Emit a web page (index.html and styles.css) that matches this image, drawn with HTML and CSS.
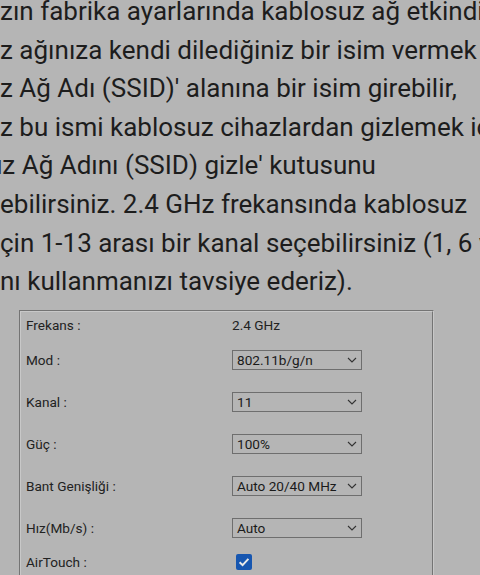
FILE: index.html
```html
<!DOCTYPE html>
<html lang="tr">
<head>
<meta charset="utf-8">
<title>Kablosuz Ayarları</title>
<link rel="stylesheet" href="styles.css">
</head>
<body>
<div class="page">
  <p class="intro">
    <span class="line">zın fabrika ayarlarında kablosuz ağ etkindir.</span>
    <span class="line">z ağınıza kendi dilediğiniz bir isim vermek için</span>
    <span class="line">z Ağ Adı (SSID)' alanına bir isim girebilir,</span>
    <span class="line">z bu ismi kablosuz cihazlardan gizlemek için</span>
    <span class="line shift">uz Ağ Adını (SSID) gizle' kutusunu</span>
    <span class="line">ebilirsiniz. 2.4 GHz frekansında kablosuz</span>
    <span class="line">çin 1-13 arası bir kanal seçebilirsiniz (1, 6 ve 11</span>
    <span class="line">nı kullanmanızı tavsiye ederiz).</span>
  </p>
  <fieldset class="settings">
    <div class="row row-first">
      <span class="label">Frekans :</span>
      <span class="value">2.4 GHz</span>
    </div>
    <div class="row">
      <span class="label">Mod :</span>
      <div class="select"><span>802.11b/g/n</span><svg class="chev" width="10" height="6" viewBox="0 0 10 6"><path d="M1 1 L5 5 L9 1" fill="none" stroke="#333" stroke-width="1.1"/></svg></div>
    </div>
    <div class="row">
      <span class="label">Kanal :</span>
      <div class="select"><span>11</span><svg class="chev" width="10" height="6" viewBox="0 0 10 6"><path d="M1 1 L5 5 L9 1" fill="none" stroke="#333" stroke-width="1.1"/></svg></div>
    </div>
    <div class="row">
      <span class="label">Güç :</span>
      <div class="select"><span>100%</span><svg class="chev" width="10" height="6" viewBox="0 0 10 6"><path d="M1 1 L5 5 L9 1" fill="none" stroke="#333" stroke-width="1.1"/></svg></div>
    </div>
    <div class="row">
      <span class="label">Bant Genişliği :</span>
      <div class="select"><span>Auto 20/40 MHz</span><svg class="chev" width="10" height="6" viewBox="0 0 10 6"><path d="M1 1 L5 5 L9 1" fill="none" stroke="#333" stroke-width="1.1"/></svg></div>
    </div>
    <div class="row">
      <span class="label">Hız(Mb/s) :</span>
      <div class="select"><span>Auto</span><svg class="chev" width="10" height="6" viewBox="0 0 10 6"><path d="M1 1 L5 5 L9 1" fill="none" stroke="#333" stroke-width="1.1"/></svg></div>
    </div>
    <div class="row row-check">
      <span class="label">AirTouch :</span>
      <span class="check"><svg width="16" height="16" viewBox="0 0 16 16"><rect x="0" y="0" width="16" height="16" rx="2" fill="#1656b0"/><path d="M3.6 8.2 L6.6 11.1 L12.4 4.9" fill="none" stroke="#e8e8e8" stroke-width="2"/></svg></span>
    </div>
  </fieldset>
</div>
</body>
</html>
```
FILE: styles.css
```css
html, body {
  margin: 0;
  padding: 0;
  background: #b5b5b5;
  overflow: hidden;
}
.page {
  width: 480px;
  height: 575px;
  overflow: hidden;
  font-family: Roboto, "Noto Sans", sans-serif;
  color: #1d1d1d;
}
.intro {
  margin: -8px 0 0 0;
  font-size: 26px;
  line-height: 38.6px;
}
.line {
  display: block;
  white-space: nowrap;
}
.line.shift {
  text-indent: -12px;
}
.settings {
  margin: 9px 0 0 19px;
  width: 415px;
  box-sizing: border-box;
  border: 2px groove #c8c8c8;
  padding: 0 5px;
  min-height: 300px;
}
.row {
  display: flex;
  align-items: center;
  height: 42px;
  font-size: 13.6px;
  color: #222;
}
.row-first { height: 27px; }
.row-check { height: 26px; }
.label {
  width: 206px;
  flex: none;
}
.value {
  font-size: 13.6px;
}
.select {
  box-sizing: border-box;
  width: 130px;
  height: 20px;
  border: 1px solid #6e6e6e;
  display: flex;
  align-items: center;
  justify-content: space-between;
  padding: 0 4px 0 4px;
  font-size: 13.6px;
  color: #1a1a1a;
}
.chev { flex: none; }
.check {
  display: flex;
  margin-left: 4px;
  width: 16px;
  height: 16px;
}
```
